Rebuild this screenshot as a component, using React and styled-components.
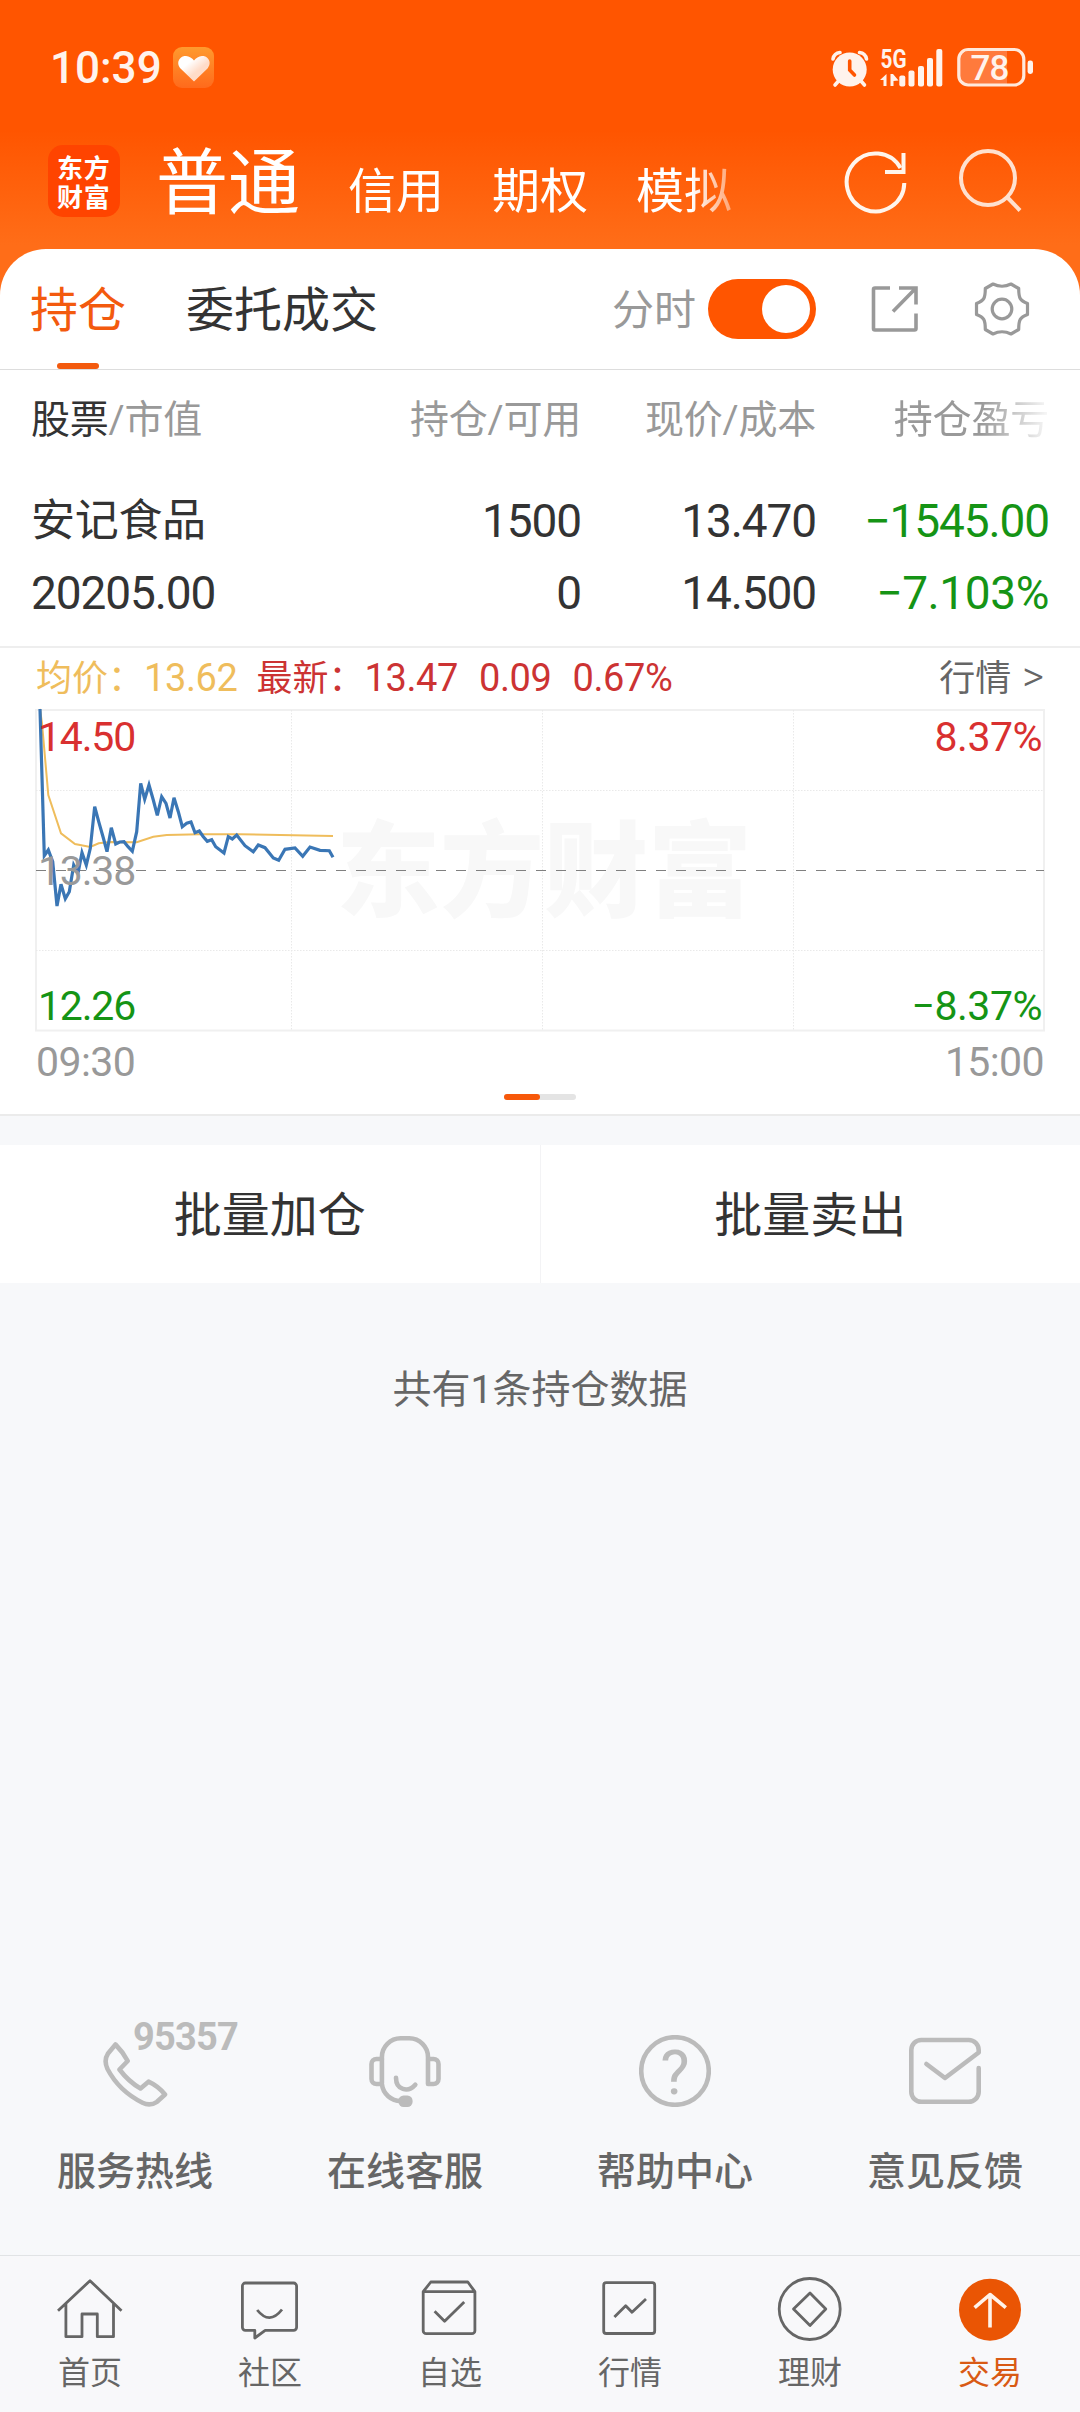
import React, { useState } from "react";
//Styling
import styled, { createGlobalStyle } from "styled-components";

//Data
const accounts = ["信用", "期权", "模拟"];

const pricePoints =
  "4,-1 8.3,145.7 12.3,140 16.7,151.7 21,196 25,174.3 29.3,188.7 33.3,181.7 37.7,155 42,163.3 46,142.7 50.3,155 54.3,138.3 58.7,96.7 62.7,111.7 67,126.7 71,141.7 75.3,117.7 79.7,134 83.7,132 88,131.7 92,136.7 96.3,141.3 100.7,121.7 104.7,73.3 108.7,89.3 113,75 117.3,90 121.3,105.3 125.7,86.7 130,93.3 134,108 138,87.7 142.3,101.7 146.3,116.7 150.7,113.3 155,112 159,122.7 163.3,121 167.3,126.7 171.3,131.3 175.7,129.7 179.7,136.7 188,143 192.3,126.7 196.3,129 200.7,125 209,135.7 217.3,141.7 222.3,135 229,137.7 237.3,148 242.7,150.3 249,139.3 259,138 266.7,146.3 274,137 284,140.3 293.3,140.7 297,147.3";

const averagePoints =
  "4,-1 6,13.3 12.3,85 25,123.3 39,134 54.3,137 62.7,133.3 74,132 100.7,132.3 117.3,126.7 130.7,125 164,124.3 204,124.3 297,126";

const services = [
  {
    label: "服务热线",
    note: "95357",
    icon: (
      <path d="M16.5 9.5Q24 17 28.7 26L20.5 34.5Q29.5 46.5 41.5 53.5L49.5 46.7Q59 51 66 59.5L58 66.8Q51 71.5 43.5 67.7Q20 56 8.5 34Q4.5 25.5 9 18.5Z" />
    ),
  },
  {
    label: "在线客服",
    icon: (
      <>
        <path d="M12.9 48V22A18.7 18.7 0 0 1 31.6 3.3H40.3A18.7 18.7 0 0 1 59 22V49H64.5A5 5 0 0 0 69.5 44V29A5 5 0 0 0 64.5 24H59" />
        <path d="M12.9 24H7.5A5 5 0 0 0 2.5 29V44A5 5 0 0 0 7.5 49H12.9A19 19 0 0 0 32 66" />
        <path d="M27 42.7C27 55 39 58 46.3 49.7" />
        <rect x="29.4" y="60.5" width="14.2" height="11.4" rx="5.2" fill="#bbb" stroke="none" />
      </>
    ),
  },
  {
    label: "帮助中心",
    icon: (
      <>
        <circle cx="36" cy="36" r="33.8" />
        <text x="36" y="58.5" textAnchor="middle" fontSize="62" fontFamily="Roboto" fontWeight="400" fill="#bbb" stroke="none">
          ?
        </text>
      </>
    ),
  },
  {
    label: "意见反馈",
    icon: (
      <path d="M69.7 33V56.7A10 10 0 0 1 59.7 66.7H12.3A10 10 0 0 1 2.3 56.7V15A10 10 0 0 1 12.3 5H59.7A10 10 0 0 1 69.7 15V17.5L36 43L17.4 29" />
    ),
  },
];

const navItems = [
  {
    label: "首页",
    icon: <path d="M1 34.7L33 4.7L64.5 34.7M8.9 28V60.7H25V38H40.3V60.7H56.5V28" />,
  },
  {
    label: "社区",
    icon: (
      <>
        <path d="M8.4 7H56.6A3 3 0 0 1 59.6 10V51.3A3 3 0 0 1 56.6 54.3H28.2L17.8 62V54.3H8.4A3 3 0 0 1 5.4 51.3V10A3 3 0 0 1 8.4 7Z" />
        <path d="M20.2 34Q32.5 49.5 45 33.5" />
      </>
    ),
  },
  {
    label: "自选",
    icon: (
      <>
        <path d="M6.2 15.7L13.8 6H50.8L57.9 15.7V54.7A3 3 0 0 1 54.9 57.7H9.2A3 3 0 0 1 6.2 54.7ZM6.2 15.7H57.9" />
        <path d="M17.6 35.3L27.6 45.3L47.2 26" />
      </>
    ),
  },
  {
    label: "行情",
    icon: (
      <>
        <rect x="6.7" y="6.7" width="51" height="50.8" rx="2.5" />
        <path d="M17.4 41L28.7 29.7L35 36.3L49 23" />
      </>
    ),
  },
  {
    label: "理财",
    icon: (
      <>
        <circle cx="32.7" cy="33" r="30.5" />
        <path d="M33 17L48.8 33L33 49.5L16.5 33Z" />
      </>
    ),
  },
  {
    label: "交易",
    active: true,
    icon: (
      <>
        <circle cx="33" cy="33.7" r="31" fill="#ea5504" stroke="none" />
        <path d="M33 51.5V18.5M17.6 31.7L33 18.5L48.8 31.7" stroke="#fff3ea" strokeWidth="3.6" />
      </>
    ),
  },
];

const StatusIcons = () => (
  <svg width="206" height="44" viewBox="829 46 206 44" fill="#fff3ec">
    <circle cx="849.7" cy="69.5" r="17" />
    <path
      d="M833 59A8 8 0 0 1 840 52.500M859.500 52.500A8 8 0 0 1 866.500 59M838.500 81L835 85M861 81L864.500 85"
      stroke="#fff3ec"
      strokeWidth="3.6"
      strokeLinecap="round"
      fill="none"
    />
    <path d="M849.700 61V70L854.500 75" stroke="#ff5500" strokeWidth="3.600" strokeLinecap="round" fill="none" />
    <text x="880.500" y="67.500" fontFamily="Roboto" fontWeight="700" fontSize="25" textLength="26" lengthAdjust="spacingAndGlyphs">
      5G
    </text>
    <path d="M880 80L886.500 74V86H883.500V80ZM890.500 74H893L898.500 80.500L893.500 81V86H890.500Z" />
    <rect x="899.300" y="75.500" width="6" height="11" rx="2" />
    <rect x="908.500" y="70.500" width="6" height="16" rx="2" />
    <rect x="918" y="66" width="6" height="20.500" rx="2" />
    <rect x="927" y="58" width="6" height="28.500" rx="2" />
    <rect x="936.300" y="49" width="6" height="37.500" rx="2" />
    <path d="M969 51H1007V84H969A9 9 0 0 1 960 75V60A9 9 0 0 1 969 51Z" fill="#ff7a3c" />
    <rect x="958.800" y="49.500" width="65" height="35.500" rx="9.500" fill="none" stroke="#ffe9dc" strokeWidth="3.200" />
    <rect x="1027.600" y="60.500" width="5.400" height="13.500" rx="2.400" />
    <text x="989.500" y="80" textAnchor="middle" fontFamily="Roboto" fontWeight="500" fontSize="35" letterSpacing="-1">
      78
    </text>
  </svg>
);

const App = () => {
  //State
  const [minuteChart, setMinuteChart] = useState(true);

  return (
    <Screen>
      <GlobalStyle />
      <Header>
        <StatusBar>
          <Clock>10:39</Clock>
          <svg width="42" height="42" viewBox="0 0 42 42">
            <defs>
              <linearGradient id="tile" x1="0" y1="0" x2="0" y2="1">
                <stop offset="0" stopColor="#ff9a2e" />
                <stop offset="1" stopColor="#ff6a1c" />
              </linearGradient>
              <linearGradient id="heart" x1="0" y1="0" x2="1" y2="1">
                <stop offset="0.3" stopColor="#fff" />
                <stop offset="0.6" stopColor="#ffdcc8" />
              </linearGradient>
            </defs>
            <rect width="41" height="41" rx="9" fill="url(#tile)" />
            <path d="M21 34.500L7.500 21.500C2 14.500 8 8.500 13 9Q18 9.500 21 13.500Q24 9.500 29 9C34 8.500 40 14.500 34.500 21.500Z" fill="url(#heart)" />
          </svg>
          <Spacer />
          <StatusIcons />
        </StatusBar>
        <AccountBar>
          <Logo>东方财富</Logo>
          <AccountTabs>
            <AccountTab $active>普通</AccountTab>
            {accounts.map((name) => (
              <AccountTab key={name}>{name}</AccountTab>
            ))}
          </AccountTabs>
          <svg width="66" height="66" viewBox="843 148 66 66" fill="none" stroke="#fff5ec" strokeWidth="4">
            <path d="M904.300 183A28.800 29 0 1 1 900.500 168" />
            <path d="M903.500 153V172H885" />
          </svg>
          <svg width="66" height="66" viewBox="955 148 66 66" fill="none" stroke="#ffe1cf" strokeWidth="4">
            <circle cx="987" cy="178" r="27" />
            <path d="M1006 197L1019 210.500" />
          </svg>
        </AccountBar>
      </Header>

      <Sheet>
        <TabRow>
          <Tab $active>持仓</Tab>
          <Tab>委托成交</Tab>
          <Spacer />
          <ToggleLabel>分时</ToggleLabel>
          <Toggle $on={minuteChart} onClick={() => setMinuteChart(!minuteChart)} />
          <svg width="48" height="48" viewBox="0 0 48 48" fill="none" stroke="#999" strokeWidth="3.600">
            <path d="M19 3H4Q2.500 3 2.500 4.500V43.500Q2.500 45 4 45H43.500Q45 45 45 43.500V28.500" />
            <path d="M28 3H45V19.500M45 3L22 26.500" />
          </svg>
          <svg width="56" height="56" viewBox="-28 -28 56 56" fill="none" stroke="#999" strokeWidth="3.200" strokeLinejoin="round">
            <path d="M-9 -25Q0 -20.500 9 -25L16.700 -20.500C16.700 -10.500 18 -8.500 25.500 -5.500V5.500C18 8.500 16.700 10.500 16.700 20.500L9 25Q0 20.500 -9 25L-16.700 20.500C-16.700 10.500 -18 8.500 -25.500 5.500V-5.500C-18 -8.500 -16.700 -10.500 -16.700 -20.500Z" />
            <circle r="9.800" />
          </svg>
        </TabRow>

        <Holdings>
          <HoldingsHead>
            <span>
              <b>股票</b>/市值
            </span>
            <span>持仓/可用</span>
            <span>现价/成本</span>
            <FadingHead>持仓盈亏</FadingHead>
          </HoldingsHead>
          <HoldingsRow>
            <StockName>安记食品</StockName>
            <span>1500</span>
            <span>13.470</span>
            <Loss>−1545.00</Loss>
          </HoldingsRow>
          <HoldingsRow>
            <span>20205.00</span>
            <span>0</span>
            <span>14.500</span>
            <Loss $wide>−7.103%</Loss>
          </HoldingsRow>
        </Holdings>

        <ChartPanel>
          <Legend>
            <Average>
              均价：<Figure>13.62</Figure>
            </Average>
            <Latest>
              最新：<Figure>13.47</Figure>
              <Figure $gap>0.09</Figure>
              <Figure $gap>0.67%</Figure>
            </Latest>
            <Spacer />
            <QuoteLink>
              行情<span>&gt;</span>
            </QuoteLink>
          </Legend>
          <Plot>
            <Watermark>东方财富</Watermark>
            <svg width="1008" height="320" viewBox="0 0 1008 320" fill="none" overflow="visible">
              <rect x="0" y="0" width="1008" height="320.500" stroke="#f0f0f0" strokeWidth="2" />
              <path d="M0 80.500H1008M0 240.500H1008M255.500 0V320M506.500 0V320M757.500 0V320" stroke="#e9e9e9" strokeDasharray="1.500 1.500" />
              <path d="M0 160.500H1008" stroke="#808080" strokeDasharray="10 10" />
              <polyline points={averagePoints} stroke="#efbd5c" strokeWidth="2" />
              <polyline points={pricePoints} stroke="#3a76b5" strokeWidth="3.2" />
            </svg>
            <PlotLabel $top={3} $color="#d93030">14.50</PlotLabel>
            <PlotLabel $top={3} $color="#d93030" $right>8.37%</PlotLabel>
            <PlotLabel $top={137} $color="#999">13.38</PlotLabel>
            <PlotLabel $top={272} $color="#159415">12.26</PlotLabel>
            <PlotLabel $top={272} $color="#159415" $right>−8.37%</PlotLabel>
          </Plot>
          <TimeAxis>
            <span>09:30</span>
            <span>15:00</span>
          </TimeAxis>
          <Pager />
        </ChartPanel>
      </Sheet>

      <BatchActions>
        <BatchButton>批量加仓</BatchButton>
        <BatchButton>批量卖出</BatchButton>
      </BatchActions>

      <Summary>共有1条持仓数据</Summary>

      <Services>
        {services.map(({ label, note, icon }) => (
          <Service key={label}>
            <svg width="72" height="72" viewBox="0 0 72 72" fill="none" stroke="#bbb" strokeWidth="4.600" strokeLinecap="round" strokeLinejoin="round">
              {icon}
            </svg>
            {note && <Hotline>{note}</Hotline>}
            {label}
          </Service>
        ))}
      </Services>

      <BottomNav>
        {navItems.map(({ label, icon, active }) => (
          <NavItem key={label} $active={active}>
            <svg width="66" height="66" viewBox="0 0 66 66" fill="none" stroke="#666" strokeWidth="2.800" strokeLinejoin="round">
              {icon}
            </svg>
            {label}
          </NavItem>
        ))}
      </BottomNav>
    </Screen>
  );
};

const GlobalStyle = createGlobalStyle`
  * {
    box-sizing: border-box;
  }
  body {
    margin: 0;
    background: #f7f8fa;
    font-family: Roboto, "Noto Sans CJK SC", sans-serif;
    color: #333;
  }
  svg {
    display: block;
    flex-shrink: 0;
  }
  button {
    border: none;
    padding: 0;
    background: none;
    font: inherit;
    color: inherit;
  }
`;

const Screen = styled.div`
  width: 1080px;
  height: 2412px;
  display: flex;
  flex-direction: column;
  overflow: hidden;
`;

const Spacer = styled.div`
  flex: 1;
`;

const Header = styled.header`
  height: 300px;
  margin-bottom: -51px;
  flex-shrink: 0;
  background: linear-gradient(#ff5500 130px, #ff6d18 245px);
`;

const StatusBar = styled.div`
  height: 136px;
  padding: 0 45px 0 50px;
  display: flex;
  align-items: center;
`;

const Clock = styled.div`
  width: 123px;
  font-size: 44px;
  font-weight: 500;
  color: #fff3ec;
`;

const AccountBar = styled.div`
  height: 90px;
  padding: 0 58px 0 48px;
  display: flex;
  align-items: center;

  svg + svg {
    margin-left: 47px;
  }
`;

const Logo = styled.div`
  width: 72px;
  height: 72px;
  padding: 7px 9px;
  border-radius: 15px;
  background: #ff4400;
  color: white;
  font-family: "Noto Sans CJK SC", sans-serif;
  font-size: 26px;
  line-height: 29px;
  font-weight: 700;
  letter-spacing: 0.8px;
  word-break: break-all;
`;

const AccountTabs = styled.div`
  width: 580px;
  margin: 0 107px 0 36px;
  padding-top: 13px;
  display: flex;
  align-items: baseline;
  gap: 48px;
  overflow: hidden;
  white-space: nowrap;
  mask-image: linear-gradient(90deg, #000 535px, transparent 605px);
`;

const AccountTab = styled.div`
  color: white;
  font-size: ${({ $active }) => ($active ? "72px" : "48px")};
  line-height: 90px;
`;

const Sheet = styled.section`
  flex-shrink: 0;
  height: 867px;
  background: white;
  border-radius: 46px 46px 0 0;
  border-bottom: 2px solid #ebebeb;
`;

const TabRow = styled.div`
  height: 121px;
  padding: 0 50px 0 30px;
  display: flex;
  align-items: center;
  border-bottom: 1px solid #ddd;

  svg {
    margin-left: 55px;
  }
`;

const Tab = styled.div`
  position: relative;
  height: 120px;
  margin-right: 60px;
  font-size: 48px;
  line-height: 123px;
  color: ${({ $active }) => ($active ? "#f35a0e" : "#333")};

  &::after {
    content: "";
    display: ${({ $active }) => ($active ? "block" : "none")};
    position: absolute;
    left: 27px;
    bottom: 0;
    width: 42px;
    height: 6px;
    border-radius: 3px;
    background: #f35a0e;
  }
`;

const ToggleLabel = styled.div`
  height: 60px;
  margin-right: 12px;
  font-size: 42px;
  line-height: 63px;
  color: #999;
`;

const Toggle = styled.button`
  width: 108px;
  height: 60px;
  padding: 6px;
  border-radius: 30px;
  display: flex;
  justify-content: ${({ $on }) => ($on ? "flex-end" : "flex-start")};
  background: ${({ $on }) => ($on ? "#ff5500" : "#ccc")};

  &::after {
    content: "";
    width: 48px;
    height: 48px;
    border-radius: 50%;
    background: white;
  }
`;

const Holdings = styled.div`
  height: 278px;
  padding: 0 31px;
  border-bottom: 2px solid #eee;
`;

const HoldingsRow = styled.div`
  height: 72px;
  display: grid;
  grid-template-columns: 1fr 250px 235px 233px;
  align-items: center;
  font-size: 46px;
  letter-spacing: -1.1px;
  text-align: right;

  > :first-child {
    text-align: left;
  }
`;

const HoldingsHead = styled(HoldingsRow)`
  height: 91px;
  margin-bottom: 24px;
  font-size: 39px;
  letter-spacing: -0.2px;
  color: #999;

  b {
    font-weight: 400;
    color: #333;
  }
`;

const FadingHead = styled.span`
  mask-image: linear-gradient(90deg, #000 165px, rgba(0, 0, 0, 0.1) 230px);
`;

const StockName = styled.span`
  font-size: 44px;
  line-height: 62px;
  letter-spacing: -0.3px;
`;

const Loss = styled.span`
  letter-spacing: ${({ $wide }) => ($wide ? "-0.4px" : "-1.1px")};
  color: #159415;
`;

const ChartPanel = styled.div`
  padding: 0 36px;
`;

const Legend = styled.div`
  height: 62px;
  padding-bottom: 2px;
  display: flex;
  align-items: center;
  font-size: 36px;
  line-height: 56px;
  color: #666;
`;

const Figure = styled.span`
  margin-left: ${({ $gap }) => ($gap ? "21px" : "0")};
  font-size: 38px;
  letter-spacing: -0.4px;
`;

const Average = styled.span`
  margin-right: 19px;
  color: #efbd5c;
`;

const Latest = styled.span`
  color: #cc3333;
`;

const QuoteLink = styled.span`
  span {
    margin-left: 11px;
    font-size: 42px;
    font-weight: 300;
  }
`;

const Plot = styled.div`
  position: relative;
  height: 321px;

  svg {
    position: relative;
  }
`;

const Watermark = styled.div`
  position: absolute;
  left: 300px;
  top: 79px;
  font-family: "Noto Sans CJK SC", sans-serif;
  font-size: 104px;
  line-height: 150px;
  font-weight: 900;
  color: #f8f8f8;
`;

const PlotLabel = styled.div`
  position: absolute;
  top: ${({ $top }) => $top}px;
  ${({ $right }) => ($right ? "right: 2px" : "left: 2px")};
  font-size: 41px;
  line-height: 48px;
  letter-spacing: ${({ $right }) => ($right ? "-0.5px" : "-1.2px")};
  color: ${({ $color }) => $color};
`;

const TimeAxis = styled.div`
  height: 62px;
  display: flex;
  justify-content: space-between;
  align-items: center;
  font-size: 41px;
  letter-spacing: -0.6px;
  color: #999;
`;

const Pager = styled.div`
  width: 72px;
  height: 6px;
  margin: 1px auto 0;
  border-radius: 3px;
  background: #e4e4e4;

  &::before {
    content: "";
    display: block;
    width: 36px;
    height: 6px;
    border-radius: 3px;
    background: #f7580a;
  }
`;

const BatchActions = styled.div`
  flex-shrink: 0;
  height: 138px;
  margin-top: 29px;
  display: flex;
  background: white;
`;

const BatchButton = styled.button`
  flex: 1;
  padding-bottom: 7px;
  font-size: 48px;

  & + & {
    border-left: 1px solid #f3f3f5;
  }
`;

const Summary = styled.div`
  flex: 1;
  padding-top: 79px;
  font-size: 39px;
  line-height: 56px;
  text-align: center;
  color: #666;
`;

const Services = styled.div`
  height: 220px;
  display: flex;
`;

const Service = styled.div`
  position: relative;
  flex: 1;
  display: flex;
  flex-direction: column;
  align-items: center;
  gap: 37px;
  font-size: 39px;
  line-height: 56px;
  font-weight: 500;
  color: #666;
`;

const Hotline = styled.div`
  position: absolute;
  left: 133px;
  top: -26px;
  font-size: 38px;
  font-weight: 700;
  letter-spacing: -0.8px;
  color: #bbb;
`;

const BottomNav = styled.nav`
  height: 157px;
  flex-shrink: 0;
  display: flex;
  background: #f8f8fa;
  border-top: 1px solid #e1e3e5;
`;

const NavItem = styled.div`
  flex: 1;
  padding-top: 20px;
  display: flex;
  flex-direction: column;
  align-items: center;
  gap: 9px;
  font-size: 32px;
  line-height: 44px;
  color: ${({ $active }) => ($active ? "#d95a14" : "#666")};
`;

export default App;
